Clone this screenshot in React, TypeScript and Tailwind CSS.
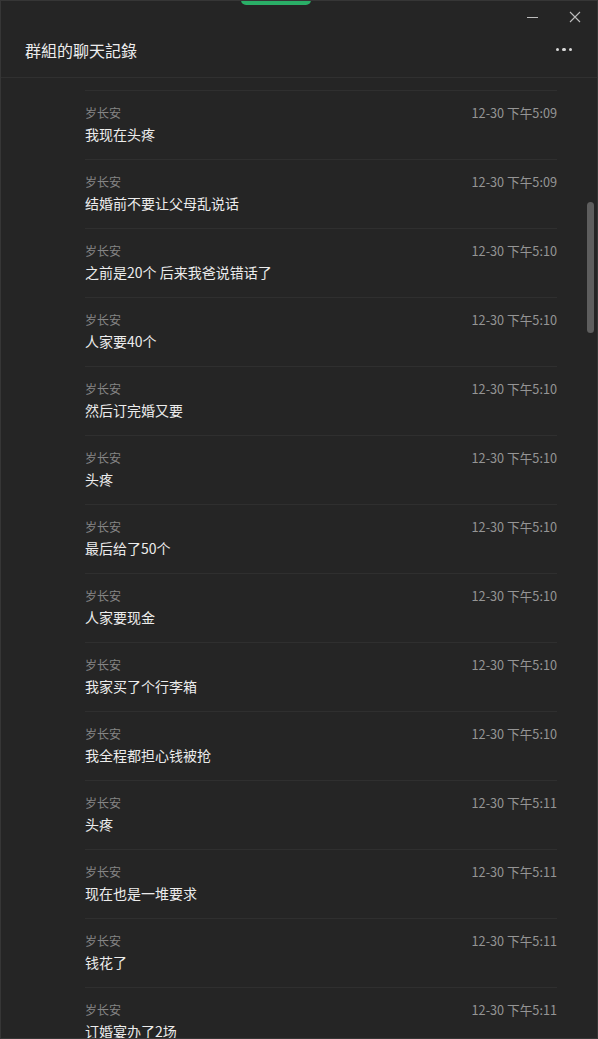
import React from "react";

const rows: [string, string][] = [
  ["12-30 下午5:09", "我现在头疼"],
  ["12-30 下午5:09", "结婚前不要让父母乱说话"],
  ["12-30 下午5:10", "之前是20个 后来我爸说错话了"],
  ["12-30 下午5:10", "人家要40个"],
  ["12-30 下午5:10", "然后订完婚又要"],
  ["12-30 下午5:10", "头疼"],
  ["12-30 下午5:10", "最后给了50个"],
  ["12-30 下午5:10", "人家要现金"],
  ["12-30 下午5:10", "我家买了个行李箱"],
  ["12-30 下午5:10", "我全程都担心钱被抢"],
  ["12-30 下午5:11", "头疼"],
  ["12-30 下午5:11", "现在也是一堆要求"],
  ["12-30 下午5:11", "钱花了"],
  ["12-30 下午5:11", "订婚宴办了2场"],
];

const font = {
  fontFamily: '"Noto Sans CJK SC", "Noto Sans", "Liberation Sans", sans-serif',
};

export default function App() {
  return (
    <div
      className="relative w-[598px] h-[1039px] overflow-hidden bg-[#252525] border border-[#363636]"
      style={font}
    >
      {/* green pill at top */}
      <div className="absolute left-[240px] top-[-1px] w-[70px] h-[5px] rounded-b-[6px] bg-[#2aae67]" />

      {/* header */}
      <div className="relative h-[77px] border-b border-[#303030] flex items-center pl-[24px] pr-[24px] justify-between">
        <div className="text-[16px] leading-[20px] text-[#ececec] mt-[21px]">群組的聊天記錄</div>
        <div className="flex gap-[3px] mt-[21px] mr-[1px]">
          <span className="w-[3.5px] h-[3.5px] rounded-full bg-[#d8d8d8]" />
          <span className="w-[3.5px] h-[3.5px] rounded-full bg-[#d8d8d8]" />
          <span className="w-[3.5px] h-[3.5px] rounded-full bg-[#d8d8d8]" />
        </div>
        {/* window controls */}
        <div className="absolute top-[10px] right-[16px] flex items-center gap-[31px]">
          <div className="w-[11px] h-[1px] bg-[#bdbdbd]" />
          <svg width="12" height="12" viewBox="0 0 12 12">
            <path d="M1 1L11 11M11 1L1 11" stroke="#bdbdbd" strokeWidth="1.1" />
          </svg>
        </div>
      </div>

      {/* list */}
      <div className="pt-[12px] pl-[84px] pr-[40px]">
        {rows.map(([t, m], i) => (
          <div key={i} className="border-t border-[#2f2f2f] pt-[13px] pb-[14px]">
            <div className="flex justify-between items-center h-[18px]">
              <span className="text-[12px] leading-[18px] text-[#858585]">岁长安</span>
              <span className="text-[12.7px] leading-[18px] text-[#959595]">{t}</span>
            </div>
            <div className="mt-[1px] text-[14px] leading-[22px] text-[#ececec]">{m}</div>
          </div>
        ))}
      </div>

      {/* scrollbar */}
      <div className="absolute left-[586px] top-[201px] w-[7px] h-[131px] rounded-full bg-[#5e5e5e]" />
    </div>
  );
}
